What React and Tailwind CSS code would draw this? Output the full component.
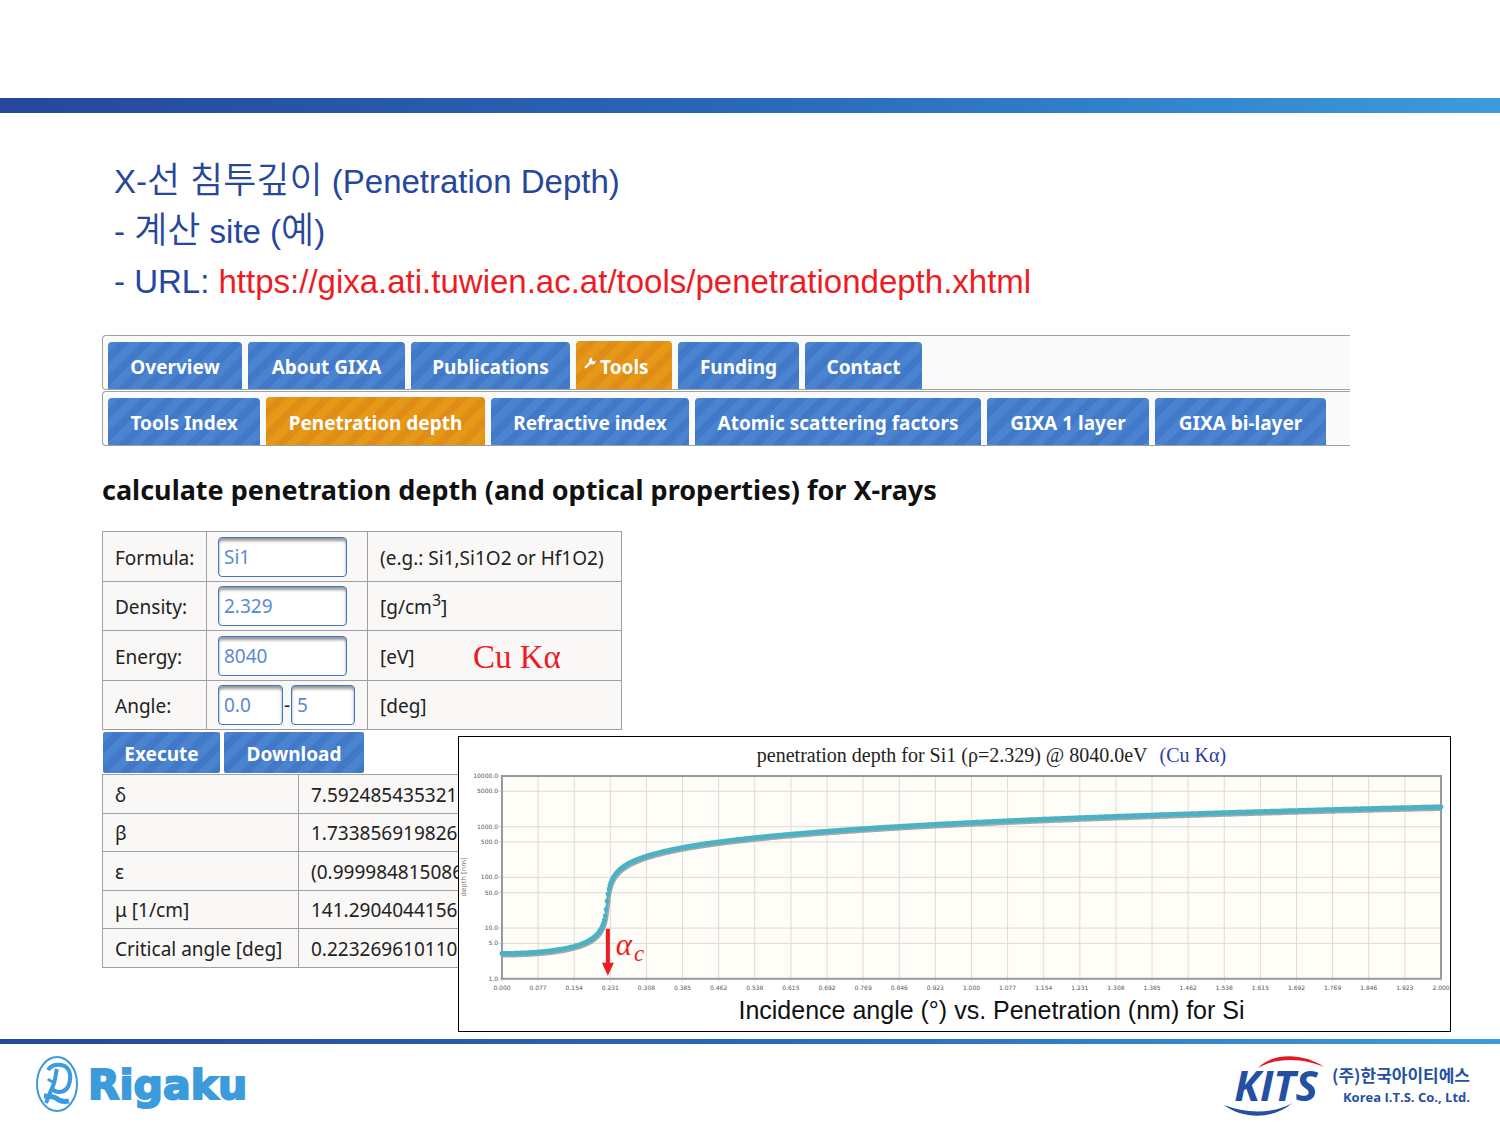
import React from "react";

const UI = "font-['Noto_Sans','Open_Sans',sans-serif]";
const ARIAL = "font-['Liberation_Sans','Noto_Sans_CJK_KR',sans-serif]";
const TIMES = "font-['Liberation_Serif',serif]";

const BLUE =
  "bg-[repeating-linear-gradient(135deg,#4a83cf_0px,#4a83cf_7px,#4178c7_9px,#4178c7_15px,#4a83cf_16px)]";
const ORANGE =
  "bg-[repeating-linear-gradient(135deg,#e59917_0px,#e59917_7px,#e08c17_9px,#e08c17_15px,#e59917_16px)]";

const mainTabs = [
  { label: "Overview", width: "w-[134px]" },
  { label: "About GIXA", width: "w-[157px]" },
  { label: "Publications", width: "w-[159px]" },
  { label: "Tools", width: "w-24", active: true, icon: true },
  { label: "Funding", width: "w-[121px]" },
  { label: "Contact", width: "w-[117px]" },
];

const toolTabs = [
  { label: "Tools Index", width: "w-[152px]" },
  { label: "Penetration depth", width: "w-[219px]", active: true },
  { label: "Refractive index", width: "w-[198px]" },
  { label: "Atomic scattering factors", width: "w-[286px]" },
  { label: "GIXA 1 layer", width: "w-[162px]" },
  { label: "GIXA bi-layer", width: "w-[171px]" },
];

const results = [
  ["δ", "7.592485435321"],
  ["β", "1.733856919826"],
  ["ε", "(0.999984815086"],
  ["μ [1/cm]", "141.2904044156"],
  ["Critical angle [deg]", "0.223269610110"],
];

function Wrench() {
  return (
    <svg viewBox="0 0 12 12" className="mb-2 size-3 shrink-0" aria-hidden="true">
      <path d="M1.8 10.2 6.8 5.2" stroke="#fff" strokeWidth="2.4" strokeLinecap="round" />
      <path
        d="M8.6 0.8A3 3 0 0 0 5.4 5.2 3 3 0 0 0 11.4 3.6L9.2 4.4 7.8 3z"
        fill="#fff"
      />
    </svg>
  );
}

function TabRow({ tabs, label }) {
  return (
    <nav
      aria-label={label}
      className="flex items-end gap-[6px] rounded-l-sm border-y border-l border-[#a0a0a0] bg-[#fafafa] pt-[5px] pl-[5px]"
    >
      {tabs.map((t) => (
        <a
          key={t.label}
          href="#"
          className={`${t.width} ${t.active ? `${ORANGE} h-12` : `${BLUE} h-[47px]`} ${t.icon ? "pl-2" : "justify-center"} flex shrink-0 items-center gap-1 rounded-t-sm pt-1 text-[19px] font-bold whitespace-nowrap text-white`}
        >
          {t.icon && <Wrench />}
          {t.label}
        </a>
      ))}
    </nav>
  );
}

const FIELD =
  "h-10 rounded-sm border border-[#3f76c6] bg-white px-[5px] text-[19px] text-[#5a8ad4] shadow-[inset_0_3px_3px_#999]";

function FormRow({ id, label, children, unit }) {
  return (
    <tr className="h-[50px] even:h-[49px]">
      <th scope="row" className="border border-[#a0a0a0] px-3 pt-[3px] text-left font-normal">
        <label htmlFor={id}>{label}</label>
      </th>
      <td className="border border-[#a0a0a0] pl-[11px]">
        <div className="flex items-center">{children}</div>
      </td>
      <td className="border border-[#a0a0a0] px-3 pt-[3px]">{unit}</td>
    </tr>
  );
}

/* Plot geometry: logarithmic depth axis, linear angle axis. */
const LEFT = 43;
const RIGHT = 983;
const TOP = 8;
const BOTTOM = 211;
const px = (deg) => LEFT + (deg / 2) * (RIGHT - LEFT);
const py = (nm) => BOTTOM - (Math.log10(nm) / 4) * (BOTTOM - TOP);

const DELTA = 7.592485e-6;
const BETA = 1.733857e-7;
function depth(deg) {
  const th = (deg * Math.PI) / 180;
  const a = th * th - 2 * DELTA;
  const b = 2 * BETA;
  const im = Math.sqrt((Math.sqrt(a * a + b * b) - a) / 2);
  return 0.1542 / (4 * Math.PI * im);
}
const samples = Array.from({ length: 1001 }, (_, i) => i * 0.002).map((d) => [
  px(d).toFixed(1),
  py(depth(d)).toFixed(1),
]);
const line = "M" + samples.map((p) => p.join(" ")).join("L");
const dots = samples.map((p) => `M${p.join(" ")}h0`).join("");

const yTicks = [10000, 5000, 1000, 500, 100, 50, 10, 5, 1];
const xTicks = Array.from({ length: 27 }, (_, i) => (i * 2) / 26);

function Plot() {
  return (
    <svg viewBox="0 0 992 226" className="block w-full" role="img" aria-label="Penetration depth plot">
      <rect x={LEFT} y={TOP} width={RIGHT - LEFT} height={BOTTOM - TOP} fill="#fefdf8" />
      <g stroke="#dedbd6" strokeWidth="1">
        {yTicks.map((t) => (
          <line key={t} x1={LEFT - 4} x2={RIGHT} y1={py(t)} y2={py(t)} />
        ))}
        {xTicks.map((t) => (
          <line key={t} x1={px(t)} x2={px(t)} y1={TOP} y2={BOTTOM + 3} />
        ))}
      </g>
      <rect
        x={LEFT}
        y={TOP}
        width={RIGHT - LEFT}
        height={BOTTOM - TOP}
        fill="none"
        stroke="#999"
        strokeWidth="2"
      />
      <g fontFamily="DejaVu Sans, sans-serif" fontSize="6" fill="#555">
        {yTicks.map((t) => (
          <text key={t} x={LEFT - 4} y={py(t) + 2} textAnchor="end">
            {t.toFixed(1)}
          </text>
        ))}
        {xTicks.map((t) => (
          <text key={t} x={px(t)} y={BOTTOM + 11} textAnchor="middle">
            {t.toFixed(3)}
          </text>
        ))}
        <text transform="translate(7 109) rotate(-90)" textAnchor="middle" fill="#777" fontSize="7">
          depth [nm]
        </text>
      </g>
      <g fill="none" strokeLinejoin="round">
        <path d={line} stroke="#8a9496" strokeWidth="4" transform="translate(1 2)" strokeOpacity="0.8" />
        <path d={line} stroke="#4bb2c5" strokeWidth="2" />
        <path d={dots} stroke="#4bb2c5" strokeWidth="5" strokeLinecap="round" />
      </g>
      <path d="M147 161h4v34h4l-6 13-6-13h4z" fill="#ed1c24" />
      <text x="157" y="187" fontFamily="Liberation Serif, serif" fontStyle="italic" fontSize="31" fill="#ed1c24">
        α
        <tspan fontSize="23" dx="2" dy="6">
          c
        </tspan>
      </text>
    </svg>
  );
}

function RigakuLogo() {
  return (
    <div className="flex items-center gap-[9px] text-[#3b9bdc]">
      <svg viewBox="0 0 44 58" className="h-[58px] w-11" fill="none" stroke="currentColor" aria-hidden="true">
        <ellipse cx="22" cy="28" rx="20" ry="27" strokeWidth="2" />
        <path d="M13 14C16 9 22 8 26 9C34 10 36 18 35 24C34 32 30 36 24 36C21 36 19 35 17 33" strokeWidth="4" />
        <path d="M22 13C20 19 21 24 18 30C15 36 14 40 11 47" strokeWidth="4" />
        <path d="M13 23C15 25 17 26 20 26" strokeWidth="3" />
        <path d="M9 40C13 40 17 40 21 42C24 45 29 46 34 45" strokeWidth="5" />
      </svg>
      <span className="font-['DejaVu_Sans',sans-serif] text-[41px] leading-[58px] font-bold [-webkit-text-stroke:2px_currentColor]">
        Rigaku
      </span>
    </div>
  );
}

function KitsLogo() {
  return (
    <div className="flex items-center text-[#2450a4]">
      <div className="relative flex h-[62px] w-[104px] items-center justify-center">
        <span className="font-['Open_Sans',sans-serif] text-[42px] leading-[62px] font-bold italic">
          KITS
        </span>
        <svg viewBox="0 0 104 62" className="absolute inset-0 size-full" aria-hidden="true">
          <path d="M34 14C50 -3 82 0 100 13C82 5 54 2 34 14z" fill="#e11b22" />
          <path d="M0 51C18 65 50 66 68 49C50 60 22 60 0 51z" fill="#2450a4" />
        </svg>
      </div>
      <div className="flex flex-col items-end pl-1 font-bold whitespace-nowrap">
        <span className="font-['Noto_Sans_CJK_KR',sans-serif] text-[17px] leading-6">(주)한국아이티에스</span>
        <span className="font-['Open_Sans',sans-serif] text-[13px] leading-5">Korea I.T.S. Co., Ltd.</span>
      </div>
    </div>
  );
}

function Ko({ children }) {
  return (
    <span lang="ko" className="text-[36px] leading-none font-[350]">
      {children}
    </span>
  );
}

export default function App() {
  return (
    <div className="flex min-h-screen flex-col bg-white pt-[98px]">
      <div className="h-[15px] bg-linear-to-r from-[#26479b] via-[#2a68b8] to-[#3c9bdc]" />

      <main className="grow pr-[49px] pl-[102px]">
        <div className={`${ARIAL} mt-11 pl-3 text-[33px] leading-[50px] text-[#26479b]`}>
          <h1>
            X-<Ko>선 침투깊이</Ko> (Penetration Depth)
          </h1>
          <p>
            - <Ko>계산</Ko> site (<Ko>예</Ko>)
          </p>
          <p>
            - URL:{" "}
            <a href="https://gixa.ati.tuwien.ac.at/tools/penetrationdepth.xhtml" className="text-[#ed1c24]">
              https://gixa.ati.tuwien.ac.at/tools/penetrationdepth.xhtml
            </a>
          </p>
        </div>

        <div className={`${UI} mt-7 mr-[101px] flex flex-col gap-px`}>
          <TabRow tabs={mainTabs} label="Site" />
          <TabRow tabs={toolTabs} label="Tools" />
        </div>

        <h2 className={`${UI} mt-[26px] text-[27px] leading-9 font-bold whitespace-nowrap text-[#111]`}>
          calculate penetration depth (and optical properties) for X-rays
        </h2>

        <div className={`${UI} relative mt-[23px] text-[19px] text-[#222]`}>
          <form onSubmit={(e) => e.preventDefault()}>
            <table className="w-[520px] table-fixed border-collapse bg-[#f9f8f7]">
              <colgroup>
                <col className="w-[104px]" />
                <col className="w-[161px]" />
                <col />
              </colgroup>
              <tbody>
                <FormRow id="formula" label="Formula:" unit="(e.g.: Si1,Si1O2 or Hf1O2)">
                  <input id="formula" defaultValue="Si1" className={`${FIELD} w-[129px]`} />
                </FormRow>
                <FormRow
                  id="density"
                  label="Density:"
                  unit={
                    <>
                      [g/cm<sup className="text-[16px]">3</sup>]
                    </>
                  }
                >
                  <input id="density" defaultValue="2.329" className={`${FIELD} w-[129px]`} />
                </FormRow>
                <FormRow
                  id="energy"
                  label="Energy:"
                  unit={
                    <div className="flex items-center">
                      <span className="w-[93px]">[eV]</span>
                      <span className={`${TIMES} text-[33px] leading-8 text-[#ed1c24]`}>Cu Kα</span>
                    </div>
                  }
                >
                  <input id="energy" defaultValue="8040" className={`${FIELD} w-[129px]`} />
                </FormRow>
                <FormRow id="angle" label="Angle:" unit="[deg]">
                  <input id="angle" defaultValue="0.0" className={`${FIELD} w-[65px]`} />
                  <span className="w-2 text-center">-</span>
                  <input aria-label="Angle to" defaultValue="5" className={`${FIELD} w-16`} />
                </FormRow>
              </tbody>
            </table>
            <div className="flex gap-1 pt-[2px] pl-px font-bold text-white">
              <button type="submit" className={`${BLUE} h-[41px] w-[117px] rounded-xs pt-[3px]`}>
                Execute
              </button>
              <button type="button" className={`${BLUE} h-[41px] w-[140px] rounded-xs pt-[3px]`}>
                Download
              </button>
            </div>
          </form>

          <table className="mt-px w-[400px] table-fixed border-collapse bg-[#f9f8f7]">
            <colgroup>
              <col className="w-[196px]" />
              <col />
            </colgroup>
            <tbody>
              {results.map(([k, v]) => (
                <tr key={k} className="h-[39px] even:h-[38px]">
                  <th scope="row" className="border border-[#a0a0a0] px-3 pt-[2px] text-left font-normal whitespace-nowrap">
                    {k}
                  </th>
                  <td className="border border-[#a0a0a0] px-3 pt-[2px]">{v}</td>
                </tr>
              ))}
            </tbody>
          </table>

          <figure className="absolute top-[205px] right-0 left-[356px] border border-black bg-white">
            <div className={`${TIMES} flex justify-center gap-3 pt-[5px] pl-[74px] text-[20px] leading-[26px] text-[#222]`}>
              <span>penetration depth for Si1 (ρ=2.329) @ 8040.0eV</span>
              <span className="text-[#2e3aa0]">(Cu Kα)</span>
            </div>
            <Plot />
            <figcaption className={`${ARIAL} pb-[5px] pl-[74px] text-center text-[25px] leading-8 text-[#111]`}>
              Incidence angle (°) vs. Penetration (nm) for Si
            </figcaption>
          </figure>
        </div>
      </main>

      <div className="h-[5px] bg-linear-to-r from-[#26479b] via-[#2a68b8] to-[#3c9bdc]" />
      <footer className="flex h-[81px] items-center justify-between pr-[30px] pl-[35px]">
        <RigakuLogo />
        <KitsLogo />
      </footer>
    </div>
  );
}
